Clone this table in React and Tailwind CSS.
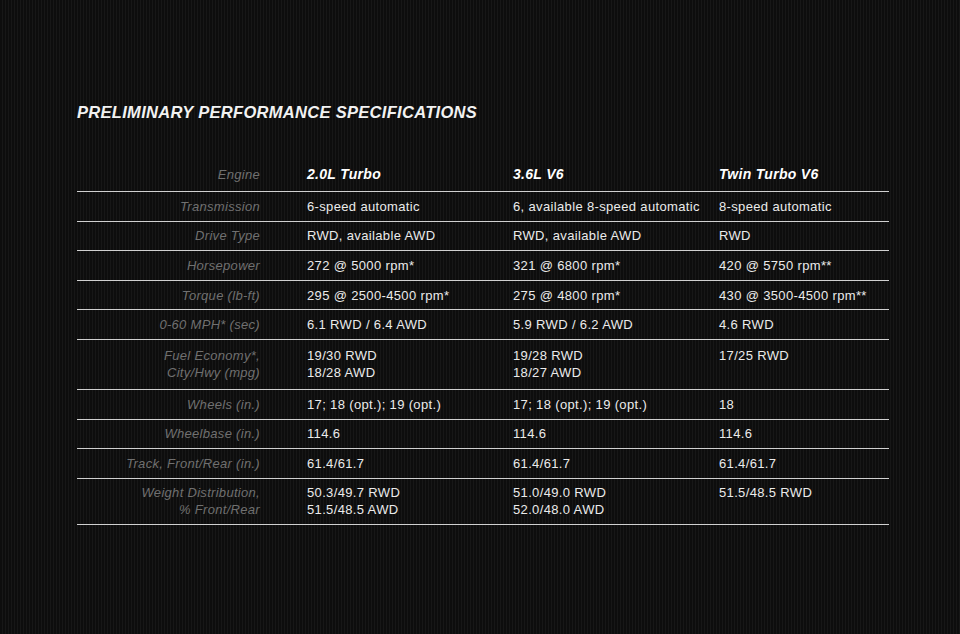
import React from 'react';

// Spec rows: label, then one value (or list of lines) per engine
const rows = [
  { label: ['Transmission'], values: [['6-speed automatic'], ['6, available 8-speed automatic'], ['8-speed automatic']] },
  { label: ['Drive Type'], values: [['RWD, available AWD'], ['RWD, available AWD'], ['RWD']] },
  { label: ['Horsepower'], values: [['272 @ 5000 rpm*'], ['321 @ 6800 rpm*'], ['420 @ 5750 rpm**']] },
  { label: ['Torque (lb-ft)'], values: [['295 @ 2500-4500 rpm*'], ['275 @ 4800 rpm*'], ['430 @ 3500-4500 rpm**']] },
  { label: ['0-60 MPH* (sec)'], values: [['6.1 RWD / 6.4 AWD'], ['5.9 RWD / 6.2 AWD'], ['4.6 RWD']] },
  { label: ['Fuel Economy*,', 'City/Hwy (mpg)'], h: 'h-[50px]', values: [['19/30 RWD', '18/28 AWD'], ['19/28 RWD', '18/27 AWD'], ['17/25 RWD']] },
  { label: ['Wheels (in.)'], values: [['17; 18 (opt.); 19 (opt.)'], ['17; 18 (opt.); 19 (opt.)'], ['18']] },
  { label: ['Wheelbase (in.)'], values: [['114.6'], ['114.6'], ['114.6']] },
  { label: ['Track, Front/Rear (in.)'], values: [['61.4/61.7'], ['61.4/61.7'], ['61.4/61.7']] },
  { label: ['Weight Distribution,', '% Front/Rear'], h: 'h-[46px]', values: [['50.3/49.7 RWD', '51.5/48.5 AWD'], ['51.0/49.0 RWD', '52.0/48.0 AWD'], ['51.5/48.5 RWD']] },
];

const engines = ['2.0L Turbo', '3.6L V6', 'Twin Turbo V6'];

const SpecRow = ({ row }) => {
  const lines = row.label.length;
  return (
    <div className={`grid grid-cols-[230px_206px_206px_1fr] items-center border-b border-[#d0d0d0] ${row.h || 'h-[29.6px]'}`}>
      <div className="pr-[47px] text-right italic text-[13px] leading-[17px] text-[#707070] tracking-[0.3px]">
        {row.label.map((l) => <div key={l}>{l}</div>)}
      </div>
      {row.values.map((v, i) => (
        <div key={i} className="text-[13px] leading-[17px] text-[#ebebeb] tracking-[0.35px]">
          {v.map((line) => <div key={line}>{line}</div>)}
          {v.length < lines && <div>&nbsp;</div>}
        </div>
      ))}
    </div>
  );
};

const App = () => {
  return (
    <div className="w-[960px] h-[634px] overflow-hidden bg-[#111111] bg-[repeating-linear-gradient(90deg,#0d0d0d_0px,#0d0d0d_2px,#171717_2px,#171717_3px)] font-['Liberation_Sans',Arial,sans-serif]">
      <div className="pl-[77px] pr-[71px] pt-[101px]">
        <h1 className="text-[16.5px] leading-[22px] font-bold italic tracking-[0.3px] text-[#f2f2f2]">
          PRELIMINARY PERFORMANCE SPECIFICATIONS
        </h1>

        <div className="mt-[35px]">
          {/* header row */}
          <div className="grid grid-cols-[230px_206px_206px_1fr] items-center h-[34px] border-b border-[#d0d0d0]">
            <div className="pr-[47px] text-right italic text-[13px] text-[#707070] tracking-[0.3px]">Engine</div>
            {engines.map((e) => (
              <div key={e} className="font-bold italic text-[14px] text-white tracking-[0.3px]">{e}</div>
            ))}
          </div>
          {rows.map((r) => <SpecRow key={r.label[0]} row={r} />)}
        </div>
      </div>
    </div>
  );
};

export default App;
